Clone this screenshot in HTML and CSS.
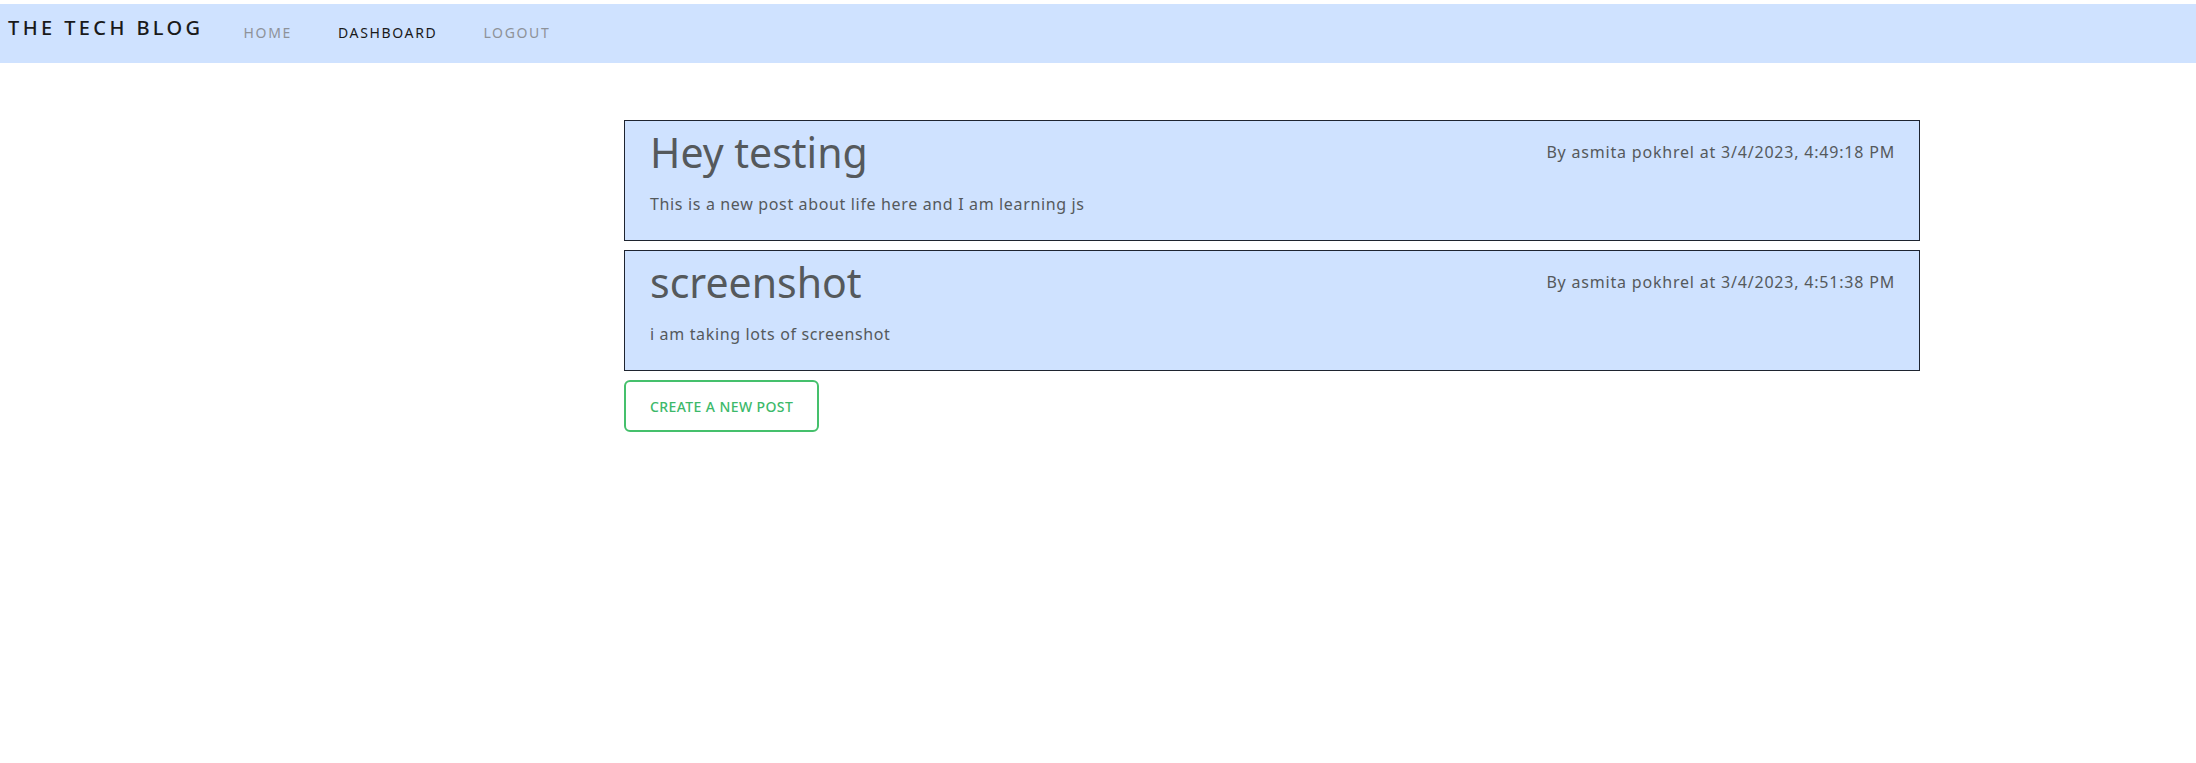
FILE: index.html
```html
<!DOCTYPE html>
<html lang="en">
<head>
<meta charset="utf-8">
<title>The Tech Blog</title>
<link rel="stylesheet" href="styles.css">
</head>
<body>
<nav class="navbar">
  <a class="brand" href="#">THE TECH BLOG</a>
  <ul class="nav-links">
    <li><a class="nav-link muted" href="#">HOME</a></li>
    <li><a class="nav-link active" href="#">DASHBOARD</a></li>
    <li><a class="nav-link muted" href="#">LOGOUT</a></li>
  </ul>
</nav>
<main class="main">
  <section class="posts">
    <article class="post-card">
      <div class="post-head">
        <h2 class="post-title">Hey testing</h2>
        <p class="post-meta">By asmita pokhrel at 3/4/2023, 4:49:18 PM</p>
      </div>
      <p class="post-body">This is a new post about life here and I am learning js</p>
    </article>
    <article class="post-card">
      <div class="post-head">
        <h2 class="post-title">screenshot</h2>
        <p class="post-meta">By asmita pokhrel at 3/4/2023, 4:51:38 PM</p>
      </div>
      <p class="post-body">i am taking lots of screenshot</p>
    </article>
    <div class="actions">
      <a class="btn-outline" href="#">CREATE A NEW POST</a>
    </div>
  </section>
</main>
</body>
</html>
```
FILE: styles.css
```css
* { box-sizing: border-box; }
body {
  margin: 0;
  padding-top: 4px;
  font-family: "Noto Sans", "Open Sans", sans-serif;
  color: #55595c;
  background: #fff;
}
a { text-decoration: none; }
.navbar {
  display: flex;
  align-items: flex-start;
  height: 59px;
  background: #cfe2ff;
}
.brand {
  padding: 12px 0 0 8px;
  font-size: 20px;
  line-height: 24px;
  letter-spacing: 3.4px;
  color: #1a1a1a;
  font-weight: 500;
}
.nav-links {
  display: flex;
  list-style: none;
  margin: 0;
  padding: 0 0 0 40px;
  gap: 46px;
}
.nav-link {
  display: block;
  padding-top: 19px;
  font-size: 14px;
  line-height: 20px;
  letter-spacing: 1.65px;
}
.nav-link.muted { color: #8e9299; }
.nav-link.active { color: #1a1a1a; }
.main {
  padding: 57px 0 0 624px;
}
.posts {
  width: 1296px;
  display: flex;
  flex-direction: column;
  gap: 9px;
}
.post-card {
  height: 121px;
  border: 1px solid #1e2430;
  background: #cfe2ff;
  padding: 5px 24px 0 25px;
}
.post-head {
  display: flex;
  justify-content: space-between;
  align-items: center;
}
.post-title {
  margin: 0;
  font-size: 41px;
  line-height: 52px;
  font-weight: 400;
  color: #55595c;
}
.post-meta {
  margin: 0;
  font-size: 16px;
  letter-spacing: 0.8px;
  color: #55595c;
}
.post-body {
  margin: 15px 0 0;
  font-size: 16px;
  letter-spacing: 0.65px;
  color: #55595c;
}
.actions { display: flex; }
.btn-outline {
  display: flex;
  align-items: center;
  justify-content: center;
  height: 52px;
  padding: 0 24px;
  border: 2px solid #45c06c;
  border-radius: 6px;
  color: #3cb96a;
  font-size: 14px;
  letter-spacing: 0.4px;
  font-weight: 500;
}
```
